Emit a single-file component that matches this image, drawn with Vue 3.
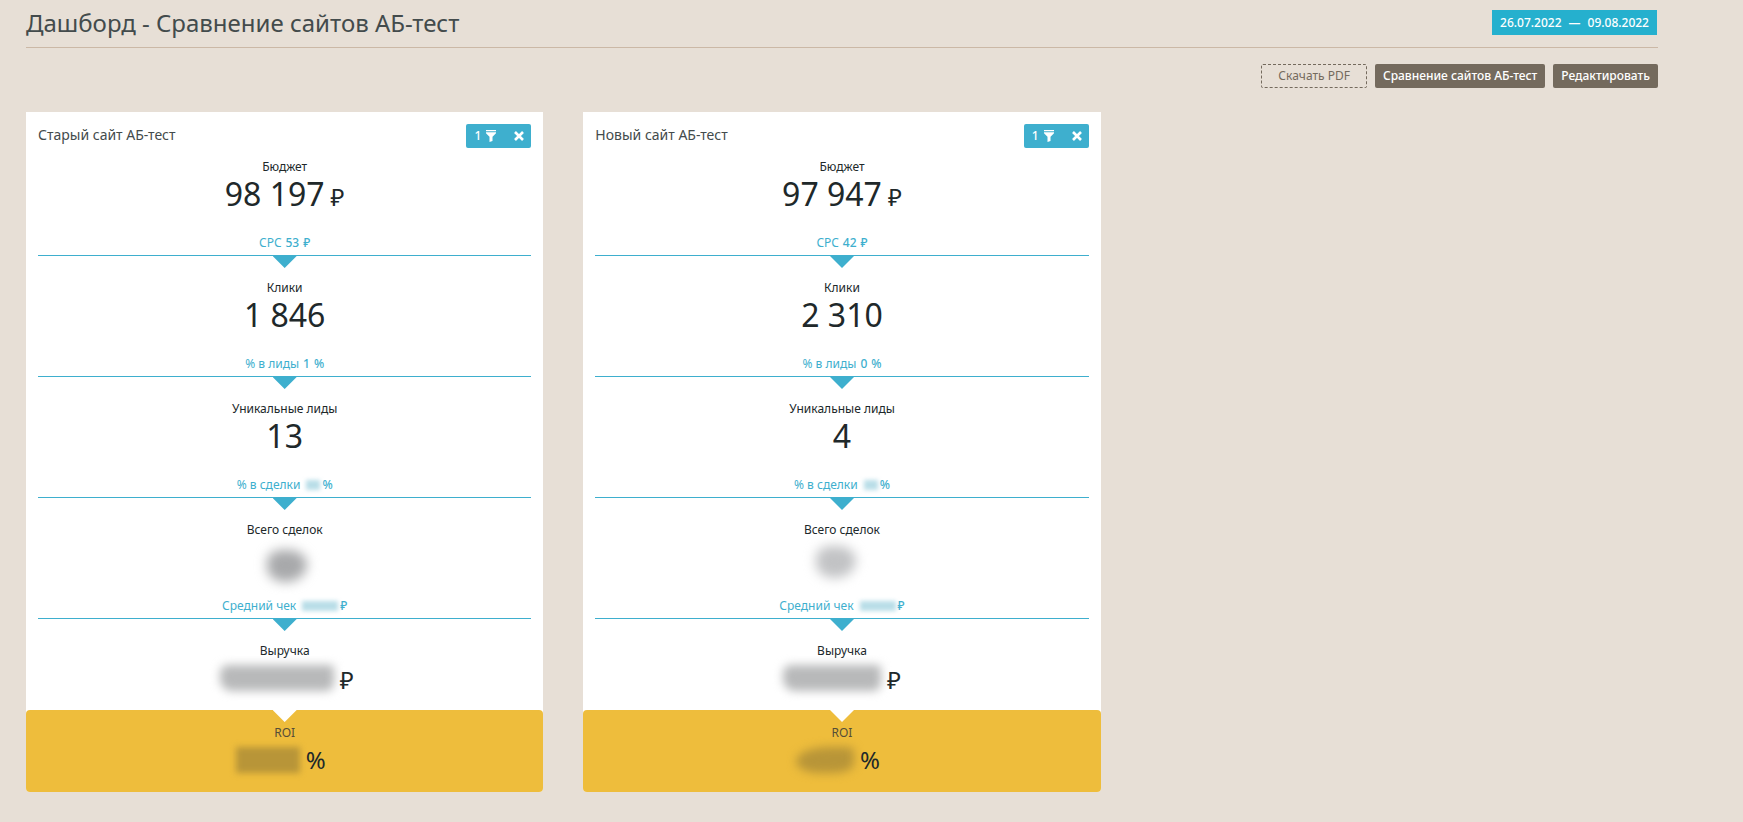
<script setup>
const cards = [
  {
    id: 'old',
    title: 'Старый сайт АБ-тест',
    steps: [
      { label: 'Бюджет', value: '98 197', unit: '₽', rate: 'CPC', rateValue: '53', rateUnit: '₽' },
      { label: 'Клики', value: '1 846', rate: '% в лиды', rateValue: '1', rateUnit: '%' },
      { label: 'Уникальные лиды', value: '13', rate: '% в сделки', rateMask: 'tiny', rateUnit: '%' },
      { label: 'Всего сделок', mask: 'deals', rate: 'Средний чек', rateMask: 'small', rateUnit: '₽' },
      { label: 'Выручка', mask: 'revenue', unit: '₽' },
    ],
  },
  {
    id: 'new',
    title: 'Новый сайт АБ-тест',
    steps: [
      { label: 'Бюджет', value: '97 947', unit: '₽', rate: 'CPC', rateValue: '42', rateUnit: '₽' },
      { label: 'Клики', value: '2 310', rate: '% в лиды', rateValue: '0', rateUnit: '%' },
      { label: 'Уникальные лиды', value: '4', rate: '% в сделки', rateMask: 'tiny', rateUnit: '%' },
      { label: 'Всего сделок', mask: 'deals', rate: 'Средний чек', rateMask: 'small', rateUnit: '₽' },
      { label: 'Выручка', mask: 'revenue', unit: '₽' },
    ],
  },
]
</script>

<template>
  <main class="page">
    <header class="head">
      <h1>Дашборд - Сравнение сайтов АБ-тест</h1>
      <button class="dates" type="button"><span>26.07.2022</span><span>—</span><span>09.08.2022</span></button>
    </header>

    <nav class="actions">
      <button class="btn outline" type="button">Скачать PDF</button>
      <button class="btn" type="button">Сравнение сайтов АБ-тест</button>
      <button class="btn" type="button">Редактировать</button>
    </nav>

    <div class="grid">
      <section v-for="card in cards" :key="card.id" class="card" :class="card.id">
        <div class="card-head">
          <h2>{{ card.title }}</h2>
          <div class="filter">
            <button type="button" class="count" aria-label="Фильтры: 1">
              1
              <svg width="10" height="12" viewBox="0 0 10 12" fill="#fff" aria-hidden="true">
                <path d="M0 0h10v1.2H0zM0 2.2h10v1L6.5 6.8V11L3.5 12V6.8L0 3.2z" />
              </svg>
            </button>
            <button type="button" class="close" aria-label="Удалить">
              <svg width="10" height="10" viewBox="0 0 10 10" fill="none" stroke="#fff" stroke-width="2.6" aria-hidden="true">
                <path d="M1 1l8 8M9 1l-8 8" />
              </svg>
            </button>
          </div>
        </div>

        <div v-for="step in card.steps" :key="step.label" class="step">
          <div class="label">{{ step.label }}</div>
          <div class="value">
            <span v-if="step.value">{{ step.value }}</span>
            <i v-else class="mask" :class="step.mask"></i>
            <span v-if="step.unit" class="unit">{{ step.unit }}</span>
          </div>
          <div v-if="step.rate" class="rate">
            <span>{{ step.rate }}</span>
            <b v-if="step.rateValue">{{ step.rateValue }}</b>
            <i v-else class="mask" :class="step.rateMask"></i>
            <b>{{ step.rateUnit }}</b>
          </div>
        </div>

        <footer class="roi">
          <div class="label">ROI</div>
          <div class="value">
            <i class="mask return"></i>
            <span class="unit">%</span>
          </div>
        </footer>
      </section>
    </div>
  </main>
</template>

<style>
body {
  background: #e7dfd6;
}
</style>

<style scoped>
.page {
  padding: 0 85px 30px 26px;
  font-family: "Noto Sans", "Open Sans", sans-serif;
  font-size: 12px;
  line-height: 16px;
  color: #20282a;
}
button {
  font: inherit;
  font-weight: 500;
  border: 0;
  padding: 0;
  margin: 0;
  cursor: pointer;
}
.head {
  display: flex;
  align-items: center;
  justify-content: space-between;
  height: 45px;
  padding-bottom: 2px;
  border-bottom: 1px solid #cbb8a6;
}
h1 {
  margin: 0;
  font-size: 24px;
  line-height: 32px;
  font-weight: 400;
  color: #434b4c;
}
.dates {
  display: flex;
  gap: 7px;
  height: 25px;
  align-items: center;
  padding: 0 8px;
  margin-right: 1px;
  background: #25b0ce;
  color: #fff;
}
.actions {
  display: flex;
  justify-content: flex-end;
  gap: 8px;
  margin-top: 16px;
}
.btn {
  height: 24px;
  padding: 0 8px;
  border-radius: 2px;
  background: #746a5d;
  color: #fff;
}
.outline {
  padding: 0 16px;
  background: none;
  border: 1px dashed #746a5d;
  color: #746a5d;
  font-weight: 400;
}
.grid {
  display: grid;
  grid-template-columns: repeat(3, 1fr);
  gap: 40px;
  margin-top: 24px;
}
.card {
  background: #fff;
  border-radius: 0 0 4px 4px;
}
.card-head {
  display: flex;
  justify-content: space-between;
  padding: 12px 12px 0;
}
h2 {
  margin: 0;
  font-size: 14px;
  line-height: 22px;
  font-weight: 400;
  color: #434b4c;
}
.filter {
  display: flex;
  align-items: center;
  height: 24px;
  padding: 0 7px 0 8px;
  gap: 18px;
  border-radius: 2px;
  background: #3eafce;
}
.filter button {
  display: flex;
  align-items: center;
  gap: 5px;
  background: none;
  color: #fff;
}
.step {
  position: relative;
  margin: 0 12px;
  padding-top: 24px;
  text-align: center;
}
.card-head + .step {
  padding-top: 11px;
}
.step:last-of-type {
  padding-bottom: 13px;
}
.step + .step::before,
.roi::before {
  content: "";
  position: absolute;
  top: 0;
  left: calc(50% - 12px);
  width: 24px;
  height: 12px;
  background: #3eafce;
  clip-path: polygon(0 0, 100% 0, 50% 100%);
}
.value {
  display: flex;
  justify-content: center;
  align-items: baseline;
  gap: 6px;
  height: 38px;
  font-size: 32px;
  line-height: 38px;
}
.unit {
  font-size: 24px;
}
.mask + .unit {
  line-height: 42px;
}
.rate {
  display: flex;
  justify-content: center;
  align-items: baseline;
  gap: 4px;
  margin-top: 22px;
  padding-bottom: 4px;
  border-bottom: 1px solid #3eafce;
  color: #3eafce;
}
.rate b {
  font-weight: 500;
}
.mask {
  align-self: center;
  flex: none;
}
.tiny,
.small {
  height: 10px;
  margin: 0 -2px 0 2px;
  background: #b9dee8;
  filter: blur(2px);
}
.tiny {
  width: 14px;
}
.small {
  width: 36px;
}
.deals {
  width: 40px;
  height: 32px;
  margin: 18px 0 0 4px;
  border-radius: 40% 50% 60% 50%;
  background: #a8a9ab;
  filter: blur(6px);
}
.revenue {
  width: 114px;
  height: 26px;
  margin-left: 4px;
  border-radius: 8px 4px 8px 12px;
  background: #b8b9ba;
  filter: blur(5px);
}
.new .deals {
  margin: 10px 12px 0 0;
  background: #c2c3c5;
}
.new .revenue {
  width: 98px;
  margin-left: 0;
}
.roi {
  position: relative;
  padding: 15px 0 13px;
  border-radius: 4px;
  background: #eebd3c;
  text-align: center;
}
.roi::before {
  background: #fff;
}
.roi .label {
  color: #554d38;
}
.roi .value {
  padding-right: 8px;
}
.roi .unit {
  line-height: 38px;
}
.return {
  width: 64px;
  height: 26px;
  background: #b89538;
  filter: blur(3px);
}
.new .return {
  width: 58px;
  border-radius: 80% 20% 50% 60%;
  filter: blur(5px);
}
</style>
